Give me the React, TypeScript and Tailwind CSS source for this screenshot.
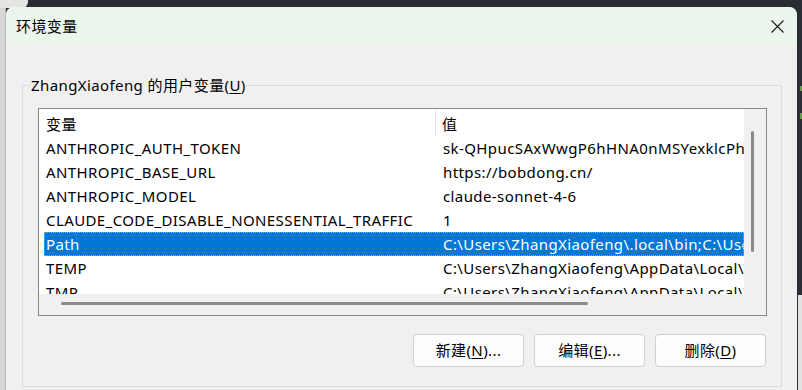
import React from 'react';

type EnvVar = { name: string; value: string };

const USER_VARS: EnvVar[] = [
  { name: 'ANTHROPIC_AUTH_TOKEN', value: 'sk-QHpucSAxWwgP6hHNA0nMSYexklcPhT3kq9Lm' },
  { name: 'ANTHROPIC_BASE_URL', value: 'https://bobdong.cn/' },
  { name: 'ANTHROPIC_MODEL', value: 'claude-sonnet-4-6' },
  { name: 'CLAUDE_CODE_DISABLE_NONESSENTIAL_TRAFFIC', value: '1' },
  { name: 'Path', value: 'C:\\Users\\ZhangXiaofeng\\.local\\bin;C:\\Users\\ZhangXiaofeng\\AppData\\Local' },
  { name: 'TEMP', value: 'C:\\Users\\ZhangXiaofeng\\AppData\\Local\\Temp' },
  { name: 'TMP', value: 'C:\\Users\\ZhangXiaofeng\\AppData\\Local\\Temp' },
];

const SELECTED = 'Path';

const CloseIcon = () => (
  <svg width="13" height="13" viewBox="0 0 13 13" fill="none">
    <path d="M0.5 0.5L12.5 12.5M12.5 0.5L0.5 12.5" stroke="#1b1b1b" strokeWidth="1.1" />
  </svg>
);

const DialogButton = ({ label, hotkey, dots }: { label: string; hotkey: string; dots?: boolean }) => (
  <button className="w-[111px] h-[33px] rounded-[4px] border border-[#d0d0d0] bg-[#fdfdfd] text-[15px] text-black flex items-center justify-center">
    {label}(<span className="underline underline-offset-2">{hotkey}</span>){dots ? '...' : ''}
  </button>
);

export default function App() {
  return (
    <div className="relative w-[802px] h-[390px] overflow-hidden bg-[#2b2d35] font-[family-name:Noto_Sans,Noto_Sans_CJK_SC,sans-serif] tracking-[0.4px] text-black">
      {/* desktop behind the dialog */}
      <div className="absolute left-0 top-0 w-[28px] h-[8px] rounded-br-[6px] bg-[#e4e4e4]" />
      <div className="absolute left-0 top-[8px] bottom-0 w-[6px] bg-[#d6d6d6] border-r border-[#b9b9b9]" />
      <div className="absolute right-0 top-[295px] bottom-0 w-[4px] bg-[#e2e2e2]" />
      <div className="absolute right-0 top-[86px] w-[2px] h-[5px] bg-[#6a9a4a]" />
      <div className="absolute right-0 top-[113px] w-[2px] h-[6px] bg-[#6a9a4a]" />

      {/* 环境变量 dialog */}
      <div className="absolute left-[6px] top-[7px] w-[791px] h-[400px] rounded-t-[8px] overflow-hidden bg-[#f0f0f0] flex flex-col">
        <div className="h-[38px] shrink-0 bg-[#eaf5ec] flex items-center justify-between pl-[10px] pr-[13px]">
          <span className="text-[15px] leading-[20px]">环境变量</span>
          <CloseIcon />
        </div>

        <div className="pt-[30px] pl-[16px] pr-[15px]">
          <fieldset className="border border-[#dcdcdc] m-0 p-0 min-w-0">
            <legend className="ml-[8px] px-0 text-[15px] leading-[20px]">
              ZhangXiaofeng 的用户变量(<span className="underline underline-offset-2">U</span>)
            </legend>

            <div className="pt-[13px] pl-[15px] pr-[14px] pb-[19px]">
              {/* list view */}
              <div className="h-[208px] border border-[#828790] bg-white flex flex-col">
                <div className="flex flex-1 min-h-0">
                  <div className="flex-1 min-w-0 overflow-hidden text-[15px]">
                    <div className="h-[27px] flex pt-[1px]">
                      <div className="w-[397px] shrink-0 pl-[7px] pt-[2px] leading-[24px] border-r border-[#e5e5e5]">变量</div>
                      <div className="pl-[6px] pt-[2px] leading-[24px]">值</div>
                    </div>
                    {USER_VARS.map((v) => {
                      const sel = v.name === SELECTED;
                      return (
                        <div
                          key={v.name}
                          className={
                            sel
                              ? 'ml-[5px] h-[24px] flex items-center bg-[#0078d7] text-white outline-1 outline-dotted outline-[#d29a5c] -outline-offset-1'
                              : 'ml-[5px] h-[24px] flex items-center'
                          }
                        >
                          <div className="w-[392px] shrink-0 pl-[2px] whitespace-nowrap overflow-hidden">{v.name}</div>
                          <div className="flex-1 min-w-0 pl-[7px] whitespace-nowrap overflow-hidden">{v.value}</div>
                        </div>
                      );
                    })}
                  </div>
                  {/* vertical scrollbar */}
                  <div className="w-[22px] shrink-0 bg-[#f0f0f0] pt-[22px] pl-[7px]">
                    <div className="w-[3px] h-[121px] rounded-full bg-[#8a8a8a]" />
                  </div>
                </div>
                {/* horizontal scrollbar */}
                <div className="h-[21px] shrink-0 bg-[#f0f0f0] pt-[8px] pl-[22px]">
                  <div className="w-[527px] h-[3px] rounded-full bg-[#8a8a8a]" />
                </div>
              </div>

              <div className="mt-[18px] mr-[1px] flex justify-end gap-[10px]">
                <DialogButton label="新建" hotkey="N" dots />
                <DialogButton label="编辑" hotkey="E" dots />
                <DialogButton label="删除" hotkey="D" />
              </div>
            </div>
          </fieldset>
        </div>
      </div>
    </div>
  );
}
